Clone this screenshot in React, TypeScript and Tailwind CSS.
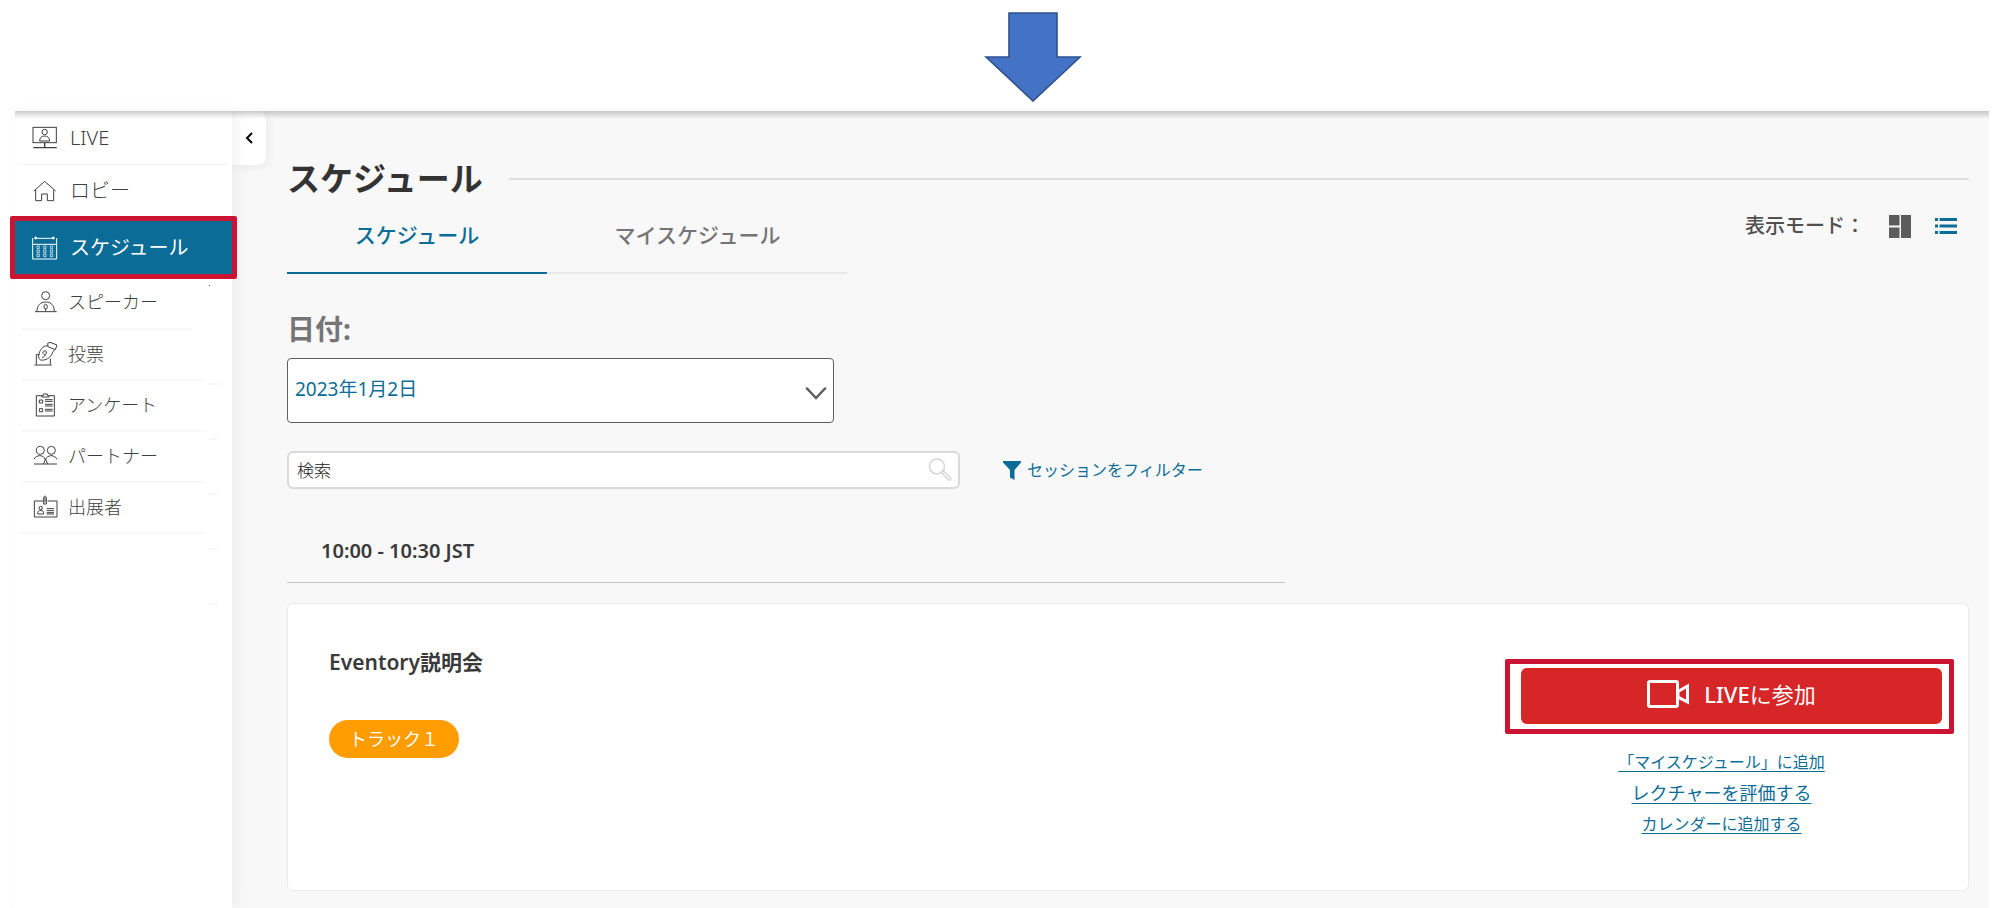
import type { ReactNode } from "react";

function Icon({ children }: { children: ReactNode }) {
  return (
    <svg
      viewBox="0 0 78 72"
      className="h-6 w-[26px] shrink-0"
      fill="none"
      stroke="currentColor"
      strokeWidth="3"
      aria-hidden="true"
    >
      {children}
    </svg>
  );
}

const LiveIcon = (
  <Icon>
    <rect x="3" y="4" width="70" height="46" />
    <circle cx="38" cy="18" r="8" />
    <path d="M23 45c0-10 6-15 15-15s15 5 15 15z" />
    <path d="M38 50v14M4 65h70" strokeWidth="4" />
  </Icon>
);

const HomeIcon = (
  <Icon>
    <path d="M6 36 38 7l33 29M11 33v32h18V45h17v20h19V33" />
  </Icon>
);

const CalendarIcon = (
  <Icon>
    <path d="M2 6v63h72V6M2 25h72M12 7h50" />
    <circle cx="11" cy="6" r="3" fill="currentColor" />
    <circle cx="64" cy="6" r="3" fill="currentColor" />
    <path
      d="M15 30h7v8h-7zM35 30h7v8h-7zM55 30h7v8h-7zM15 42h7v8h-7zM35 42h7v8h-7zM55 42h7v8h-7zM15 54h7v8h-7zM35 54h7v8h-7zM55 54h7v8h-7z"
      strokeWidth="2"
    />
  </Icon>
);

const SpeakerIcon = (
  <Icon>
    <circle cx="41" cy="17" r="12" />
    <path d="M15 64c0-18 10-28 26-28s26 10 26 28M9 65h65M41 56v9" />
    <ellipse cx="41" cy="50" rx="5" ry="7" />
  </Icon>
);

const VoteIcon = (
  <Icon>
    <path d="M7 69h52M13 68V38h10M55 68V50M47 4l7-3 21 8-5 14-22-9z" />
    <path d="M48 12c-10-2-15 2-19 8-5 6-8 12-9 20-1 7 1 12 6 14 10 2 24-3 30-12 5-6 5-12 12-19" />
    <path d="M40 39c-7-1-10-9-4-12 5-2 8 1 7 6-3 7-6 12-13 14" />
  </Icon>
);

const SurveyIcon = (
  <Icon>
    <path d="M29 8H13v61h54V8H51M29 12V8h5V3h12v5h5v4z" />
    <path d="M22 21h10v9H22zM22 47h10v9H22z" />
    <path d="M39 20h23M39 25h23M39 34h23M39 39h23M39 49h23M39 54h23" />
  </Icon>
);

const PartnerIcon = (
  <Icon>
    <circle cx="25" cy="19" r="12" />
    <circle cx="58" cy="19" r="12" />
    <path d="M6 46c5-14 30-16 34 2 6-18 29-16 35-2M6 60h69M40 46l-5 14M41 46l6 14" />
  </Icon>
);

const ExhibitorIcon = (
  <Icon>
    <path d="M33 18H7v48h68V18H47M35 27V8c0-6 8-6 8 0v19zM39 6v16" />
    <circle cx="26" cy="39" r="5" />
    <path d="M17 57c0-8 3-11 9-11s9 3 9 11zM44 41h22M44 47h22M44 53h22M44 57h22" />
  </Icon>
);

const topItems = [
  { label: "LIVE", icon: LiveIcon, item: "h-[54px] border-b border-[#f2f2f2]" },
  { label: "ロビー", icon: HomeIcon, item: "h-[56px] pb-1" },
];

const lowerItems = [
  { label: "投票", icon: VoteIcon },
  { label: "アンケート", icon: SurveyIcon },
  { label: "パートナー", icon: PartnerIcon },
  { label: "出展者", icon: ExhibitorIcon },
];

function Sidebar() {
  return (
    <aside className="relative z-10 flex w-[217px] shrink-0 flex-col bg-white text-[#3f3f3f] shadow-[4px_0_14px_rgba(0,0,0,0.05)]">
      <nav aria-label="メニュー">
        <ul>
          {topItems.map((item) => (
            <li key={item.label} className={`mx-[3px] ${item.item}`}>
              <a href="#" className="flex h-full items-center gap-3 pl-[14px] text-xl font-light">
                {item.icon}
                {item.label}
              </a>
            </li>
          ))}
          <li className="relative h-[53px] bg-[#0b6d97] text-white">
            <a href="#" aria-current="page" className="flex h-full items-center gap-3 pl-[17px] text-xl">
              {CalendarIcon}
              スケジュール
            </a>
            <span className="pointer-events-none absolute -inset-[5px] rounded-xs border-[5px] border-[#cb1332]" />
          </li>
          <li className="mr-[40px] ml-1.5 h-[56px] border-b-2 border-[#f8f8f8] pt-0.5">
            <a href="#" className="flex h-full items-center gap-[10px] pl-[11px] text-lg font-light">
              {SpeakerIcon}
              スピーカー
            </a>
          </li>
          {lowerItems.map((item) => (
            <li key={item.label} className="mr-[26px] ml-1.5 h-[51px] border-b-2 border-[#f8f8f8] pb-0.5">
              <a href="#" className="flex h-full items-center gap-[10px] pl-[11px] text-lg font-light">
                {item.icon}
                {item.label}
              </a>
            </li>
          ))}
        </ul>
      </nav>
      <span className="pointer-events-none absolute top-[174px] right-[22px] h-px w-px bg-[#555]" />
      <div className="pointer-events-none absolute top-[272px] right-[14px] flex flex-col gap-[53px]">
        <span className="h-0.5 w-[9px] bg-[#f7f7f7]" />
        <span className="h-0.5 w-[9px] bg-[#f7f7f7]" />
        <span className="h-0.5 w-[9px] bg-[#f7f7f7]" />
        <span className="h-0.5 w-[9px] bg-[#f7f7f7]" />
        <span className="h-0.5 w-[9px] bg-[#f7f7f7]" />
      </div>
    </aside>
  );
}

function SessionCard() {
  return (
    <article className="mt-5 flex min-h-[288px] justify-between rounded-md border border-[#ebebeb] bg-white pr-[14px] pl-[41px]">
      <div className="pt-[43px]">
        <h3 className="text-[21px] leading-[30px] font-semibold text-[#3a3a3a]">
          Eventory<span className="font-bold">説明会</span>
        </h3>
        <span className="mt-[43px] inline-flex h-[38px] items-center rounded-full bg-[#ff9c00] px-5 text-lg text-white">
          トラック１
        </span>
      </div>
      <div className="w-[449px] pt-[55px]">
        <div className="rounded-xs border-[5px] border-[#cb1332] pt-1 pr-[7px] pb-[5px] pl-[11px]">
          <button className="flex h-[56px] w-full items-center justify-center gap-[14px] rounded-md bg-[#d62628] pb-1 text-[22px] leading-8 text-white">
            <svg viewBox="0 0 43 28" className="h-7 w-[43px]" fill="none" stroke="currentColor" strokeWidth="3" aria-hidden="true">
              <rect x="1.5" y="1.5" width="29" height="25" rx="1.5" />
              <path d="M31 11.5 40.5 6v16L31 17z" />
            </svg>
            <span>
              <span className="font-medium">LIVE</span>に参加
            </span>
          </button>
        </div>
        <div className="mt-[13px] flex flex-col items-center pr-4 text-[#0b6d97] underline-offset-3">
          <a href="#" className="text-base leading-[31px] underline">「マイスケジュール」に追加</a>
          <a href="#" className="text-lg leading-[31px] underline">レクチャーを評価する</a>
          <a href="#" className="text-base leading-[31px] underline">カレンダーに追加する</a>
        </div>
      </div>
    </article>
  );
}

export default function App() {
  return (
    <div className="flex min-h-screen flex-col bg-white font-['Noto_Sans','Noto_Sans_CJK_JP',sans-serif]">
      <header className="flex h-[111px] justify-center pt-3 pl-[73px]">
        <svg viewBox="0 0 98 90" className="h-[90px] w-[98px]" aria-hidden="true">
          <path d="M25 1h48v44h23L49 89 2 45h23z" fill="#4472c4" stroke="#2f528f" strokeWidth="1.6" />
        </svg>
      </header>
      <div className="relative mr-1 ml-[15px] flex grow bg-[#f8f8f8]">
        <div className="pointer-events-none absolute inset-x-0 top-0 z-20 h-2 bg-linear-to-b from-black/20 to-transparent" />
        <Sidebar />
        <button
          aria-label="メニューを閉じる"
          className="flex h-[54px] w-[34px] shrink-0 items-center justify-center rounded-r-lg bg-white shadow-[2px_2px_8px_rgba(0,0,0,0.06)]"
        >
          <svg viewBox="0 0 8 12" className="h-3 w-2" fill="none" stroke="#000" strokeWidth="2" aria-hidden="true">
            <path d="M7 1 2 6l5 5" />
          </svg>
        </button>
        <main className="min-w-0 grow pt-[43px] pr-5 pb-[17px] pl-[21px]">
          <div className="flex h-[50px] items-center gap-[26px]">
            <h1 className="text-[33px] leading-[50px] font-bold whitespace-nowrap text-[#333]">スケジュール</h1>
            <div className="h-0.5 grow bg-[#dedede]" />
          </div>
          <div className="mt-px flex items-start justify-between">
            <div role="tablist" className="flex gap-px text-[21px] font-medium">
              <button role="tab" aria-selected="true" className="h-[69px] w-[260px] border-b-2 border-[#0b6d97] pb-[5px] text-[#0b6d97]">
                スケジュール
              </button>
              <button role="tab" aria-selected="false" className="h-[69px] w-[299px] border-b-2 border-[#e8e8e8] pb-[5px] text-[#757575]">
                マイスケジュール
              </button>
            </div>
            <div className="flex h-[42px] items-center gap-6 pr-3">
              <span className="text-xl font-medium text-[#505050]">表示モード：</span>
              <button aria-label="グリッド表示">
                <svg viewBox="0 0 22 23" className="h-[23px] w-[22px]" fill="#5c5c5c" aria-hidden="true">
                  <path d="M0 0h10.5v10.5H0zM0 12.5h10.5V23H0zM12 0h10v23H12z" />
                </svg>
              </button>
              <button aria-label="リスト表示">
                <svg viewBox="0 0 22 18" className="h-[18px] w-[22px]" fill="#0b6d97" aria-hidden="true">
                  <path d="M0 1h3v3H0zM4.500 1H22v3H4.500zM0 7.500h3v3H0zM4.500 7.500H22v3H4.500zM0 14h3v3H0zM4.500 14H22v3H4.500z" />
                </svg>
              </button>
            </div>
          </div>

          <label htmlFor="date" className="mt-[37px] block text-[28px] leading-9 font-bold text-[#757575]">
            日付:
          </label>
          <div className="relative mt-[11px] w-[547px]">
            <select
              id="date"
              className="block h-[65px] w-full appearance-none rounded-sm border border-[#5f5f5f] bg-white px-[7px] pb-0.5 text-[19px] text-[#0b6d97]"
            >
              <option>2023年1月2日</option>
            </select>
            <svg
              viewBox="0 0 22 13"
              className="pointer-events-none absolute top-[29px] right-[7px] h-[13px] w-[22px]"
              fill="none"
              stroke="#5c5c5c"
              strokeWidth="2.5"
              strokeLinecap="round"
              aria-hidden="true"
            >
              <path d="m2 1.500 9 9.500 9-9.500" />
            </svg>
          </div>

          <div className="mt-[28px] flex items-center gap-[43px]">
            <div className="relative w-[673px]">
              <input
                type="text"
                aria-label="検索"
                placeholder="検索"
                className="block h-[38px] w-full rounded-md border-2 border-[#d9d9d9] bg-white px-2 text-[17px] font-light placeholder:text-[#222]"
              />
              <svg
                viewBox="0 0 24 23"
                className="pointer-events-none absolute top-[7px] right-2 h-[23px] w-6"
                fill="none"
                stroke="#d4d4d4"
                strokeWidth="1.500"
                aria-hidden="true"
              >
                <circle cx="9" cy="8.500" r="7.500" />
                <path d="m13.500 14.500 1.800-1.800 7 7c1.500 1.500-.7 3.200-1.900 2z" />
              </svg>
            </div>
            <button className="flex items-center gap-[6px] text-base text-[#0b6d97]">
              <svg viewBox="0 0 18 19" className="h-[19px] w-[18px]" fill="currentColor" aria-hidden="true">
                <path d="M0 0h18v1.500L11.500 9v10L7 16.500V9L0 1.500z" />
              </svg>
              セッションをフィルター
            </button>
          </div>

          <h2 className="mt-[32px] h-[62px] max-w-[998px] border-b border-[#c4c4c4] pl-[34px] text-xl leading-[60px] font-semibold text-[#3a3a3a]">
            10:00 - 10:30 JST
          </h2>
          <SessionCard />
        </main>
      </div>
    </div>
  );
}
